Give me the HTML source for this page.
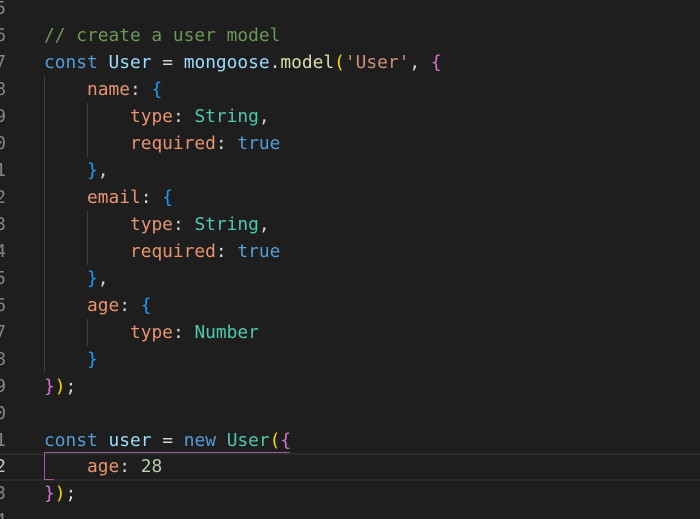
<!DOCTYPE html>
<html><head><style>
html,body{margin:0;width:700px;height:519px;overflow:hidden}
body{background:#1e1e1e;position:relative;font-family:"DejaVu Sans Mono","Liberation Mono",monospace;font-size:17.85px}
.l{position:absolute;left:0;height:27px;line-height:27px;white-space:pre;width:700px}
.n{position:absolute;left:-6px;width:12px;text-align:right;color:#858585}
.c{position:absolute;left:44px}
.cm{color:#6a9955}.k{color:#569cd6}.v{color:#9cdcfe}.f{color:#dcdcaa}.s{color:#ce9178}.p{color:#e8946f}.t{color:#4ec9b0}.w{color:#d4d4d4}.g{color:#ffd700}.m{color:#da70d6}.b{color:#179fff}.num{color:#b5cea8}
.guide{position:absolute;width:1px;background:#404040}
</style></head><body>
<div style="position:absolute;left:0;top:453px;width:700px;height:28px;box-sizing:border-box;border-top:2px solid #2a2a2a;border-bottom:2px solid #2a2a2a"></div>
<div class="guide" style="left:44px;top:76px;height:297px"></div>
<div class="guide" style="left:87px;top:103px;height:54px"></div>
<div class="guide" style="left:87px;top:211px;height:54px"></div>
<div class="guide" style="left:87px;top:319px;height:27px"></div>
<div style="position:absolute;left:44px;top:452px;width:246px;height:1px;background:#9a5c9a"></div>
<div style="position:absolute;left:44px;top:452px;width:1px;height:28px;background:#9a5c9a"></div>
<div style="position:absolute;left:44px;top:479px;width:10px;height:1px;background:#9a5c9a"></div>

<div class="l" style="top:-5px"><span class="n">5</span></div>
<div class="l" style="top:22px"><span class="n">6</span><span class="c cm">// create a user model</span></div>
<div class="l" style="top:49px"><span class="n">7</span><span class="c"><span class="k">const</span> <span class="v">User</span> <span class="w">=</span> <span class="v">mongoose</span><span class="w">.</span><span class="f">model</span><span class="g">(</span><span class="s">'User'</span><span class="w">, </span><span class="m">{</span></span></div>
<div class="l" style="top:76px"><span class="n">8</span><span class="c">    <span class="p">name</span><span class="w">: </span><span class="b">{</span></span></div>
<div class="l" style="top:103px"><span class="n">9</span><span class="c">        <span class="p">type</span><span class="w">: </span><span class="t">String</span><span class="w">,</span></span></div>
<div class="l" style="top:130px"><span class="n">0</span><span class="c">        <span class="p">required</span><span class="w">: </span><span class="k">true</span></span></div>
<div class="l" style="top:157px"><span class="n">1</span><span class="c">    <span class="b">}</span><span class="w">,</span></span></div>
<div class="l" style="top:184px"><span class="n">2</span><span class="c">    <span class="p">email</span><span class="w">: </span><span class="b">{</span></span></div>
<div class="l" style="top:211px"><span class="n">3</span><span class="c">        <span class="p">type</span><span class="w">: </span><span class="t">String</span><span class="w">,</span></span></div>
<div class="l" style="top:238px"><span class="n">4</span><span class="c">        <span class="p">required</span><span class="w">: </span><span class="k">true</span></span></div>
<div class="l" style="top:265px"><span class="n">5</span><span class="c">    <span class="b">}</span><span class="w">,</span></span></div>
<div class="l" style="top:292px"><span class="n">6</span><span class="c">    <span class="p">age</span><span class="w">: </span><span class="b">{</span></span></div>
<div class="l" style="top:319px"><span class="n">7</span><span class="c">        <span class="p">type</span><span class="w">: </span><span class="t">Number</span></span></div>
<div class="l" style="top:346px"><span class="n">8</span><span class="c">    <span class="b">}</span></span></div>
<div class="l" style="top:373px"><span class="n">9</span><span class="c"><span class="m">}</span><span class="g">)</span><span class="w">;</span></span></div>
<div class="l" style="top:400px"><span class="n">0</span></div>
<div class="l" style="top:427px"><span class="n">1</span><span class="c"><span class="k">const</span> <span class="v">user</span> <span class="w">=</span> <span class="k">new</span> <span class="t">User</span><span class="g">(</span><span class="m">{</span></span></div>
<div class="l" style="top:453px"><span class="n" style="color:#c6c6c6">2</span><span class="c">    <span class="p">age</span><span class="w">: </span><span class="num">28</span></span></div>
<div class="l" style="top:480px"><span class="n">3</span><span class="c"><span class="m">}</span><span class="g">)</span><span class="w">;</span></span></div>
<div class="l" style="top:507px"><span class="n">4</span></div>
</body></html>
